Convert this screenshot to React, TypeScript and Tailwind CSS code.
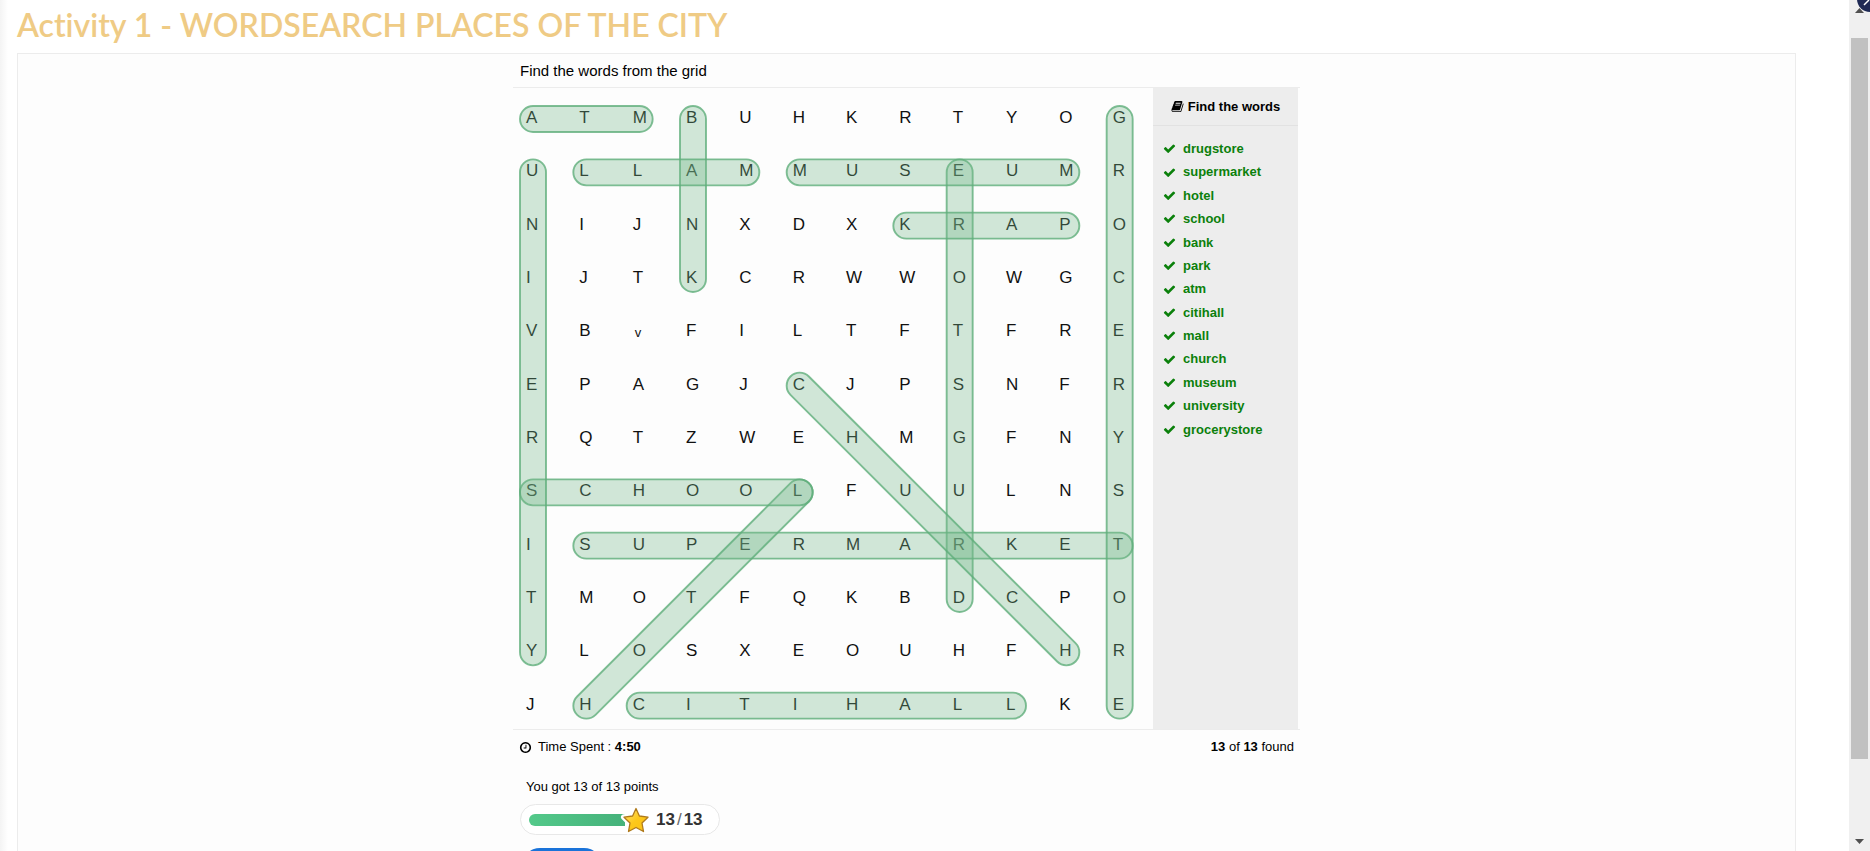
const GRID = [
  "ATMBUHKRTYOG",
  "ULLAMMUSEUMR",
  "NIJNXDXKRAPO",
  "IJTKCRWWOWGC",
  "VBvFILTFTFRE",
  "EPAGJCJPSNFR",
  "RQTZWEHMGFNY",
  "SCHOOLFUULNS",
  "ISUPERMARKET",
  "TMOTFQKBDCPO",
  "YLOSXEOUHFHR",
  "JHCITIHALLKE",
];

const WORDS = [
  "drugstore", "supermarket", "hotel", "school", "bank", "park", "atm",
  "citihall", "mall", "church", "museum", "university", "grocerystore",
];

// [column, row, column, row] of the first and last letter of each found word
const FOUND = [
  [8, 9, 8, 1],
  [1, 8, 11, 8],
  [1, 11, 5, 7],
  [0, 7, 5, 7],
  [3, 0, 3, 3],
  [10, 2, 7, 2],
  [0, 0, 2, 0],
  [2, 11, 9, 11],
  [4, 1, 1, 1],
  [5, 5, 10, 10],
  [5, 1, 10, 1],
  [0, 1, 0, 10],
  [11, 0, 11, 11],
];

const CELL = 640 / 12;

const ICONS = {
  check:
    "M1671 566q0 40-28 68l-724 724-136 136q-28 28-68 28t-68-28l-136-136-362-362q-28-28-28-68t28-68l136-136q28-28 68-28t68 28l294 295 656-657q28-28 68-28t68 28l136 136q28 28 28 68z",
  clock:
    "M1024 544v448q0 14-9 23t-23 9h-320q-14 0-23-9t-9-23v-64q0-14 9-23t23-9h224v-352q0-14 9-23t23-9h64q14 0 23 9t9 23zm416 352q0-148-73-273t-198-198-273-73-273 73-198 198-73 273 73 273 198 198 273 73 273-73 198-198 73-273zm224 0q0 209-103 385.500t-279.500 279.500-385.500 103-385.500-103-279.500-279.500-103-385.500 103-385.500 279.500-279.500 385.500-103 385.500 103 279.500 279.500 103 385.500z",
  book:
    "M1703 478q40 57 18 129l-275 906q-19 64-76.500 107.500t-122.500 43.500h-923q-77 0-148.500-53.500t-99.500-131.500q-24-67-2-127 0-4 3-27t4-37q1-8-3-21.500t-3-19.500q2-11 8-21t16.500-23.500 16.500-23.500q23-38 45-91.500t30-91.500q3-10 .5-30t-.5-28q3-11 17-28t17-23q21-36 42-92t25-90q1-9-2.500-32t.5-28q4-13 22-30.500t22-22.500q19-26 42.500-84.500t27.500-96.500q1-8-3-25.500t-2-26.500q2-8 9-18t18-23 17-21q8-12 16.500-30.500t15-35 16-36 19.500-32 26.500-23.500 36-11.500 47.500 5.500l-1 3q38-9 51-9h761q74 0 114 56t18 130l-274 906q-36 119-71.500 153.500t-128.500 34.500h-869q-27 0-38 15-11 16-1 43 24 70 144 70h923q29 0 56-15.500t35-41.500l300-987q7-22 5-57 38 15 59 43zm-1064 2q-4 13 2 22.500t20 9.500h608q13 0 25.500-9.500t16.500-22.500l21-64q4-13-2-22.500t-20-9.500h-608q-13 0-25.500 9.500t-16.500 22.500zm-83 256q-4 13 2 22.500t20 9.500h608q13 0 25.500-9.500t16.500-22.500l21-64q4-13-2-22.500t-20-9.500h-608q-13 0-25.500 9.500t-16.500 22.500z",
};

function Icon({ name }: { name: keyof typeof ICONS }) {
  return (
    <svg viewBox="0 0 1792 1792" className="h-[13px] w-[13px] shrink-0 fill-current" aria-hidden="true">
      <path d={ICONS[name]} />
    </svg>
  );
}

function Highlights() {
  return (
    <svg viewBox="0 0 640 640" className="pointer-events-none absolute left-0 top-0 h-[640px] w-full" aria-hidden="true">
      {FOUND.map(([c1, r1, c2, r2], i) => {
        const x = 20 + c1 * CELL;
        const y = 31 + r1 * CELL;
        const dx = (c2 - c1) * CELL;
        const dy = (r2 - r1) * CELL;
        const angle = (Math.atan2(dy, dx) * 180) / Math.PI;
        return (
          <rect
            key={i}
            x={x - 13}
            y={y - 13}
            width={Math.hypot(dx, dy) + 26}
            height={26}
            rx={13}
            transform={`rotate(${angle} ${x} ${y})`}
            fill="#75b88d"
            fillOpacity={0.33}
            stroke="#5fae7b"
            strokeOpacity={0.8}
            strokeWidth={1.9}
          />
        );
      })}
    </svg>
  );
}

function Star() {
  const shape = "M14 2.500 17.400 10 26 11.200 20 17 21.500 25.500 14 21.500 6.500 25.500 8 17 2 11.200 10.600 10Z";
  return (
    <svg viewBox="0 0 28 28" className="absolute -right-[25px] -top-2 h-7 w-7 overflow-visible" aria-hidden="true">
      <defs>
        <linearGradient id="gold" x1="0" y1="0" x2="1" y2="1">
          <stop offset="0" stopColor="#ffe37a" />
          <stop offset="0.5" stopColor="#fdc81b" />
          <stop offset="1" stopColor="#fbc010" />
        </linearGradient>
      </defs>
      <path d={shape} fill="#fff" stroke="#fff" strokeWidth="6" strokeLinejoin="round" />
      <path d={shape} fill="url(#gold)" stroke="#b07a1c" strokeWidth="1.300" strokeLinejoin="round" />
    </svg>
  );
}

function ScrollBar() {
  return (
    <div className="relative flex w-[21px] shrink-0 flex-col items-center justify-between overflow-hidden bg-[#f0f0f0] pt-2 pb-[7px]" aria-hidden="true">
      <svg viewBox="0 0 9 5" className="h-[5px] w-[9px]"><path d="M0 5 4.500 0 9 5Z" fill="#505050" /></svg>
      <div className="mt-[25px] w-[17px] grow bg-[#c1c1c1]" />
      <svg viewBox="0 0 9 5" className="mt-20 h-[5px] w-[9px]"><path d="M0 0H9L4.500 5Z" fill="#505050" /></svg>
      <svg viewBox="0 0 26 26" className="absolute -right-[13px] -top-[14px] h-[26px] w-[26px]">
        <circle cx="13" cy="13" r="13" fill="#1f2a55" />
        <path d="M7 19 12 14" stroke="#fff" strokeWidth="1.500" />
      </svg>
    </div>
  );
}

export default function App() {
  return (
    <div className="flex h-screen overflow-hidden bg-white font-['Liberation_Sans',Arial,sans-serif] text-black">
      <div className="w-2 shrink-0 bg-linear-to-r from-[#f4f4f4] to-white" />
      <main className="flex min-w-0 grow flex-col pl-[9px] pr-[53px]">
        <h1 className="mb-2 pt-1 font-['Lato',sans-serif] text-[32px] font-semibold leading-[41px] text-[#efcb85] [font-variant-ligatures:none]">
          Activity 1 - WORDSEARCH PLACES OF THE CITY
        </h1>
        <section className="grow border border-b-0 border-[#ececec] bg-[#fdfdfd]">
          <div className="mx-auto w-[787px]">
            <p className="px-[7px] text-[15px] leading-[33px]">Find the words from the grid</p>
            <div className="flex border-y border-[#ececec]">
              <div className="relative h-[641px] w-[640px]">
                <div className="grid h-[640px] grid-cols-12 grid-rows-12 text-[17px] leading-5 text-[#111]">
                  {GRID.flatMap((row, r) =>
                    row.split("").map((letter, c) => (
                      <span
                        key={`${r}-${c}`}
                        className={letter === "v" ? "pl-[15px] pt-[22px] text-[13px]" : "pl-[13px] pt-5"}
                      >
                        {letter}
                      </span>
                    )),
                  )}
                </div>
                <Highlights />
              </div>
              <aside className="w-[145px] bg-[#ededed]">
                <h2 className="flex h-[38px] items-center justify-center gap-1 border-b border-[#e2e2e2] text-[13px] font-bold">
                  <Icon name="book" />
                  Find the words
                </h2>
                <ul className="flex h-[326px] flex-col px-[10px] py-[11px] text-[13px] font-bold text-[#0b800b]">
                  {WORDS.map((word) => (
                    <li key={word} className="flex grow items-center gap-[7px]">
                      <Icon name="check" />
                      {word}
                    </li>
                  ))}
                </ul>
              </aside>
            </div>
            <div className="flex items-center justify-between px-[6px] text-[13px] leading-[34px]">
              <span className="flex items-center gap-[6px]">
                <Icon name="clock" />
                <span>Time Spent : <b>4:50</b></span>
              </span>
              <span><b>13</b> of <b>13</b> found</span>
            </div>
            <div className="px-[7px]">
              <p className="px-[6px] pt-[13px] text-[13px] leading-5">You got 13 of 13 points</p>
              <div className="mt-[7px] flex h-[31px] w-[200px] items-center rounded-full border border-[#e8e8e8] bg-white pl-2">
                <div className="relative h-3 w-[96px] rounded-l-full bg-linear-to-r from-[#53c98a] to-[#46b27b]">
                  <Star />
                </div>
                <span className="ml-[31px] text-[17px] font-bold text-[#333]">
                  13<span className="mx-[2px] font-normal text-[#666]">/</span>13
                </span>
              </div>
              <button type="button" aria-label="Retry" className="ml-[2px] mt-[13px] h-9 w-20 rounded-full bg-[#1a73d9]" />
            </div>
          </div>
        </section>
      </main>
      <ScrollBar />
    </div>
  );
}
